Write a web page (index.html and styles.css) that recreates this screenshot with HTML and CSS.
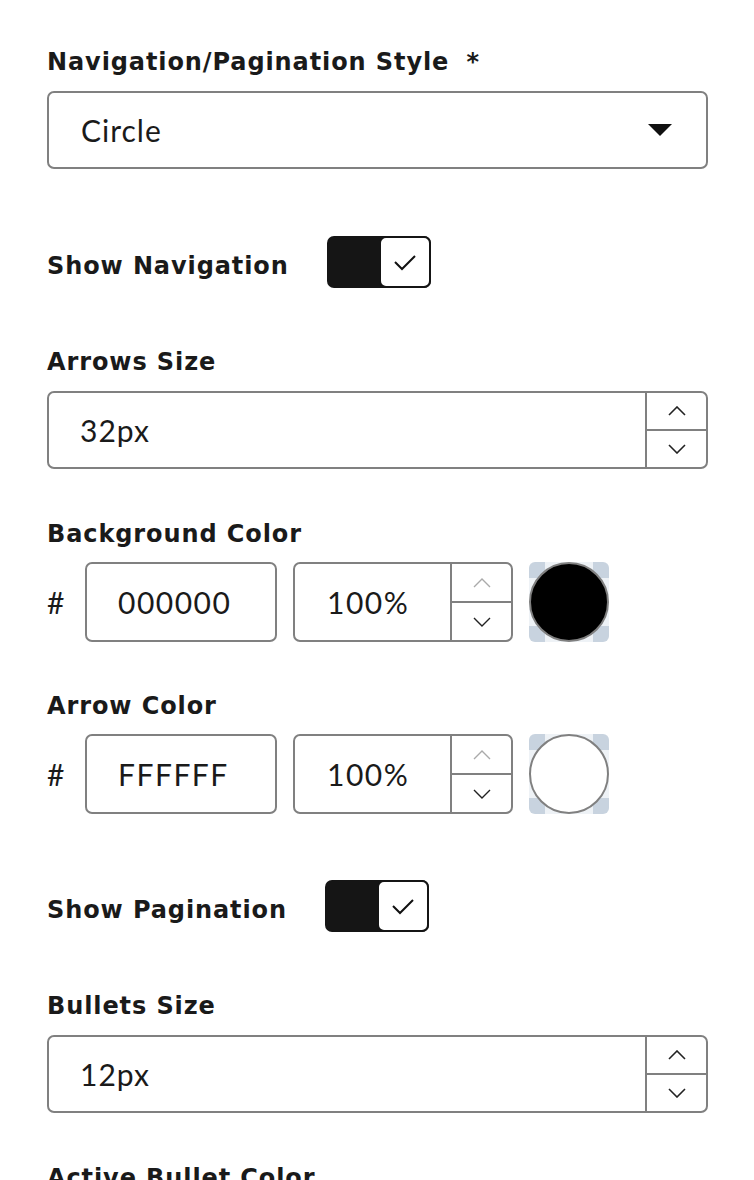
FILE: index.html
```html
<!DOCTYPE html>
<html lang="en">
<head>
<meta charset="UTF-8" />
<meta name="viewport" content="width=device-width, initial-scale=1.0">
<title>Slider Settings</title>
<link rel="stylesheet" href="styles.css">
</head>
<body>
<div class="panel">
    <!-- style select -->
    <div class="field">
        <label class="label">Navigation/Pagination Style <span class="req">*</span></label>
        <div class="select">
            <span>Circle</span>
            <svg class="caret" width="24" height="12" viewBox="0 0 24 12"><path d="M0 0 L24 0 L12 12 Z" fill="#111"/></svg>
        </div>
    </div>

    <div class="toggle-row">
        <span class="label">Show Navigation</span>
        <div class="toggle">
            <div class="knob">
                <svg width="24" height="18" viewBox="0 0 24 18"><path d="M2 9 L9 16 L22 3" fill="none" stroke="#111" stroke-width="2"/></svg>
            </div>
        </div>
    </div>

    <div class="field">
        <label class="label">Arrows Size</label>
        <div class="number">
            <span class="value">32px</span>
            <div class="spin">
                <div class="spin-btn"><svg width="18" height="10" viewBox="0 0 18 10"><path d="M1 9 L9 1 L17 9" fill="none" stroke="#222" stroke-width="1.6"/></svg></div>
                <div class="spin-btn"><svg width="18" height="10" viewBox="0 0 18 10"><path d="M1 1 L9 9 L17 1" fill="none" stroke="#222" stroke-width="1.6"/></svg></div>
            </div>
        </div>
    </div>

    <div class="field color-field">
        <label class="label">Background Color</label>
        <div class="color-row">
            <span class="hash">#</span>
            <div class="hex">000000</div>
            <div class="opacity">
                <span class="value">100%</span>
                <div class="spin small">
                    <div class="spin-btn"><svg width="18" height="10" viewBox="0 0 18 10"><path d="M1 9 L9 1 L17 9" fill="none" stroke="#aaa" stroke-width="1.4"/></svg></div>
                    <div class="spin-btn"><svg width="18" height="10" viewBox="0 0 18 10"><path d="M1 1 L9 9 L17 1" fill="none" stroke="#222" stroke-width="1.4"/></svg></div>
                </div>
            </div>
            <div class="swatch"><div class="dot" style="background:#000000"></div></div>
        </div>
    </div>

    <div class="field color-field">
        <label class="label">Arrow Color</label>
        <div class="color-row">
            <span class="hash">#</span>
            <div class="hex">FFFFFF</div>
            <div class="opacity">
                <span class="value">100%</span>
                <div class="spin small">
                    <div class="spin-btn"><svg width="18" height="10" viewBox="0 0 18 10"><path d="M1 9 L9 1 L17 9" fill="none" stroke="#aaa" stroke-width="1.4"/></svg></div>
                    <div class="spin-btn"><svg width="18" height="10" viewBox="0 0 18 10"><path d="M1 1 L9 9 L17 1" fill="none" stroke="#222" stroke-width="1.4"/></svg></div>
                </div>
            </div>
            <div class="swatch"><div class="dot" style="background:#ffffff"></div></div>
        </div>
    </div>

    <div class="toggle-row">
        <span class="label">Show Pagination</span>
        <div class="toggle">
            <div class="knob">
                <svg width="24" height="18" viewBox="0 0 24 18"><path d="M2 9 L9 16 L22 3" fill="none" stroke="#111" stroke-width="2"/></svg>
            </div>
        </div>
    </div>

    <div class="field">
        <label class="label">Bullets Size</label>
        <div class="number">
            <span class="value">12px</span>
            <div class="spin">
                <div class="spin-btn"><svg width="18" height="10" viewBox="0 0 18 10"><path d="M1 9 L9 1 L17 9" fill="none" stroke="#222" stroke-width="1.6"/></svg></div>
                <div class="spin-btn"><svg width="18" height="10" viewBox="0 0 18 10"><path d="M1 1 L9 9 L17 1" fill="none" stroke="#222" stroke-width="1.6"/></svg></div>
            </div>
        </div>
    </div>

    <div class="field">
        <label class="label">Active Bullet Color</label>
    </div>
</div>
</body>
</html>
```

FILE: styles.css
```css
  body {
      margin: 0;
      background: #fff;
      color: #1a1a1a;
      font-family: 'Lato', sans-serif;
  }
  .panel {
      padding: 44px 46px 0 47px;
      display: flex;
      flex-direction: column;
  }
  .label {
      display: block;
      padding-top: 2px;
      font-family: 'DejaVu Sans', sans-serif;
      font-size: 24px;
      font-weight: 700;
      letter-spacing: 0.9px;
      line-height: 32px;
      color: #1a1a1a;
  }
  .req {
      margin-left: 8px;
  }
  .field {
      display: flex;
      flex-direction: column;
      gap: 13px;
      margin-bottom: 47px;
  }
  .color-field {
      gap: 12px;
      margin-bottom: 46px;
  }
  .select, .number {
      height: 78px;
      box-sizing: border-box;
      border: 2px solid #808080;
      border-radius: 7px;
      display: flex;
      align-items: center;
      font-size: 30px;
      letter-spacing: 1px;
      color: #1a1a1a;
  }
  .select {
      justify-content: space-between;
      padding: 0 34px 0 32px;
  }
  .number .value {
      flex: 1;
      padding-left: 31px;
  }
  .spin {
      align-self: stretch;
      width: 59px;
      border-left: 2px solid #808080;
      display: flex;
      flex-direction: column;
  }
  .spin-btn {
      flex: 1;
      display: flex;
      align-items: center;
      justify-content: center;
  }
  .spin-btn + .spin-btn {
      border-top: 2px solid #808080;
  }
  .toggle-row {
      display: flex;
      align-items: center;
      gap: 38px;
      margin-top: 20px;
      margin-bottom: 56px;
  }
  .toggle-row .label {
      margin-top: 6px;
  }
  .toggle {
      width: 104px;
      height: 52px;
      box-sizing: border-box;
      background: #151515;
      border-radius: 7px;
      display: flex;
      justify-content: flex-end;
  }
  .knob {
      width: 52px;
      box-sizing: border-box;
      background: #fff;
      border: 2px solid #151515;
      border-radius: 7px;
      display: flex;
      align-items: center;
      justify-content: center;
  }
  .color-row {
      display: flex;
      align-items: center;
      gap: 16px;
      height: 80px;
      font-size: 30px;
      letter-spacing: 1.5px;
  }
  .hash {
      width: 22px;
      letter-spacing: 0;
  }
  .hex, .opacity {
      height: 80px;
      box-sizing: border-box;
      border: 2px solid #808080;
      border-radius: 7px;
      display: flex;
      align-items: center;
  }
  .hex {
      width: 192px;
      padding-left: 31px;
  }
  .opacity {
      width: 220px;
  }
  .opacity .value {
      flex: 1;
      padding-left: 32px;
  }
  .spin.small {
      width: 59px;
  }
  .swatch {
      width: 80px;
      height: 80px;
      border-radius: 6px;
      background-color: #eef2f6;
      background-image:
          linear-gradient(#c8d3df, #c8d3df),
          linear-gradient(#c8d3df, #c8d3df),
          linear-gradient(#c8d3df, #c8d3df),
          linear-gradient(#c8d3df, #c8d3df);
      background-size: 16px 16px;
      background-repeat: no-repeat;
      background-position: left top, right top, left bottom, right bottom;
      display: flex;
      align-items: center;
      justify-content: center;
  }
  .dot {
      width: 80px;
      height: 80px;
      box-sizing: border-box;
      border: 2px solid #808080;
      border-radius: 50%;
  }
```
